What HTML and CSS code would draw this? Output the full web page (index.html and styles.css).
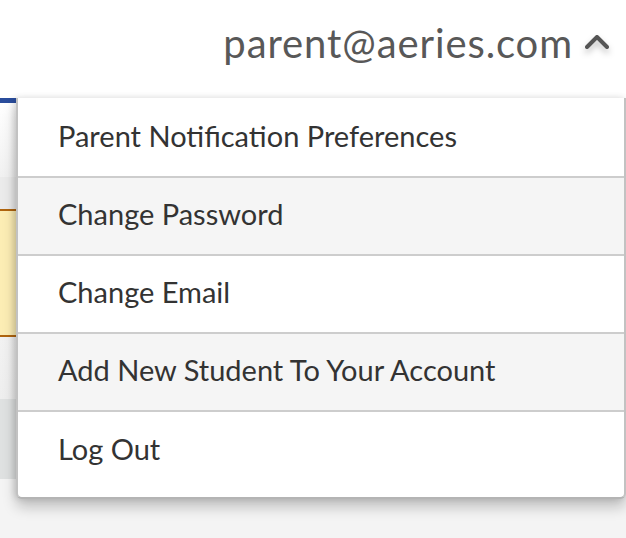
FILE: index.html
```html
<!DOCTYPE html>
<html>
<head>
<meta charset="utf-8">
<link rel="stylesheet" href="styles.css">
</head>
<body>
<header class="topbar">
  <span class="email">parent@aeries.com</span>
  <svg class="chevron" width="26" height="20" viewBox="0 0 26 20"><path d="M3 15 L13 5 L23 15" fill="none" stroke="#555" stroke-width="4" stroke-linecap="round" stroke-linejoin="round"/></svg>
</header>
<main class="page">
  <div class="nav"></div>
  <div class="band-gray"></div>
  <div class="band-yellow"></div>
  <div class="band-light"></div>
  <div class="band-dark"></div>
  <div class="band-rest"></div>
  <ul class="menu">
    <li class="item first">Parent Notification Preferences</li>
    <li class="item alt">Change Password</li>
    <li class="item">Change Email</li>
    <li class="item alt">Add New Student To Your Account</li>
    <li class="item last">Log Out</li>
  </ul>
</main>
</body>
</html>
```
FILE: styles.css
```css
html, body {
  margin: 0;
  padding: 0;
  background: #f4f4f4;
  font-family: "Lato", "Open Sans", sans-serif;
}
.topbar {
  height: 98px;
  background: #ffffff;
  display: flex;
  align-items: center;
  justify-content: flex-end;
  padding-right: 16px;
  box-sizing: border-box;
  gap: 11px;
}
.email {
  font-size: 40px;
  color: #585858;
  letter-spacing: 0.9px;
  margin-top: -12px;
}
.chevron {
  margin-top: -14px;
  filter: drop-shadow(0 4px 3px rgba(0,0,0,0.25));
}
.page {
  position: relative;
  height: 440px;
  display: flex;
  flex-direction: column;
}
.nav {
  height: 74px;
  border-top: 5px solid #2a4d9c;
  background: linear-gradient(#ffffff, #f1f1f1);
}
.band-gray {
  height: 32px;
  background: #ebebeb;
}
.band-yellow {
  height: 124px;
  background: #fcedb4;
  border-top: 2px solid #b0650f;
  border-bottom: 2px solid #b0650f;
}
.band-light {
  height: 62px;
  background: linear-gradient(#f2f2f2, #eeeeee);
}
.band-dark {
  height: 80px;
  background: #dfe1e1;
}
.band-rest {
  flex: 1;
  background: #f4f4f4;
}
.menu {
  position: absolute;
  top: 0;
  left: 16px;
  right: 0;
  margin: 0;
  padding: 0;
  list-style: none;
  background: #fff;
  border-left: 2px solid #c2c2c2;
  border-right: 2px solid #c2c2c2;
  border-bottom: 2px solid #b4b4b4;
  border-radius: 0 0 6px 6px;
  box-shadow: 0 8px 14px rgba(0,0,0,0.22), -2px 0 6px rgba(0,0,0,0.12);
}
.item {
  display: flex;
  align-items: center;
  padding-left: 40px;
  padding-bottom: 5px;
  box-sizing: border-box;
  height: 78px;
  font-size: 29px;
  color: #333333;
  border-bottom: 2px solid #cdcdcd;
  background: #ffffff;
}
.item.first {
  height: 80px;
  padding-bottom: 4px;
}
.item.alt {
  background: #f5f5f5;
}
.item.last {
  height: 85px;
  border-bottom: none;
  border-radius: 0 0 6px 6px;
  padding-bottom: 12px;
}
```
